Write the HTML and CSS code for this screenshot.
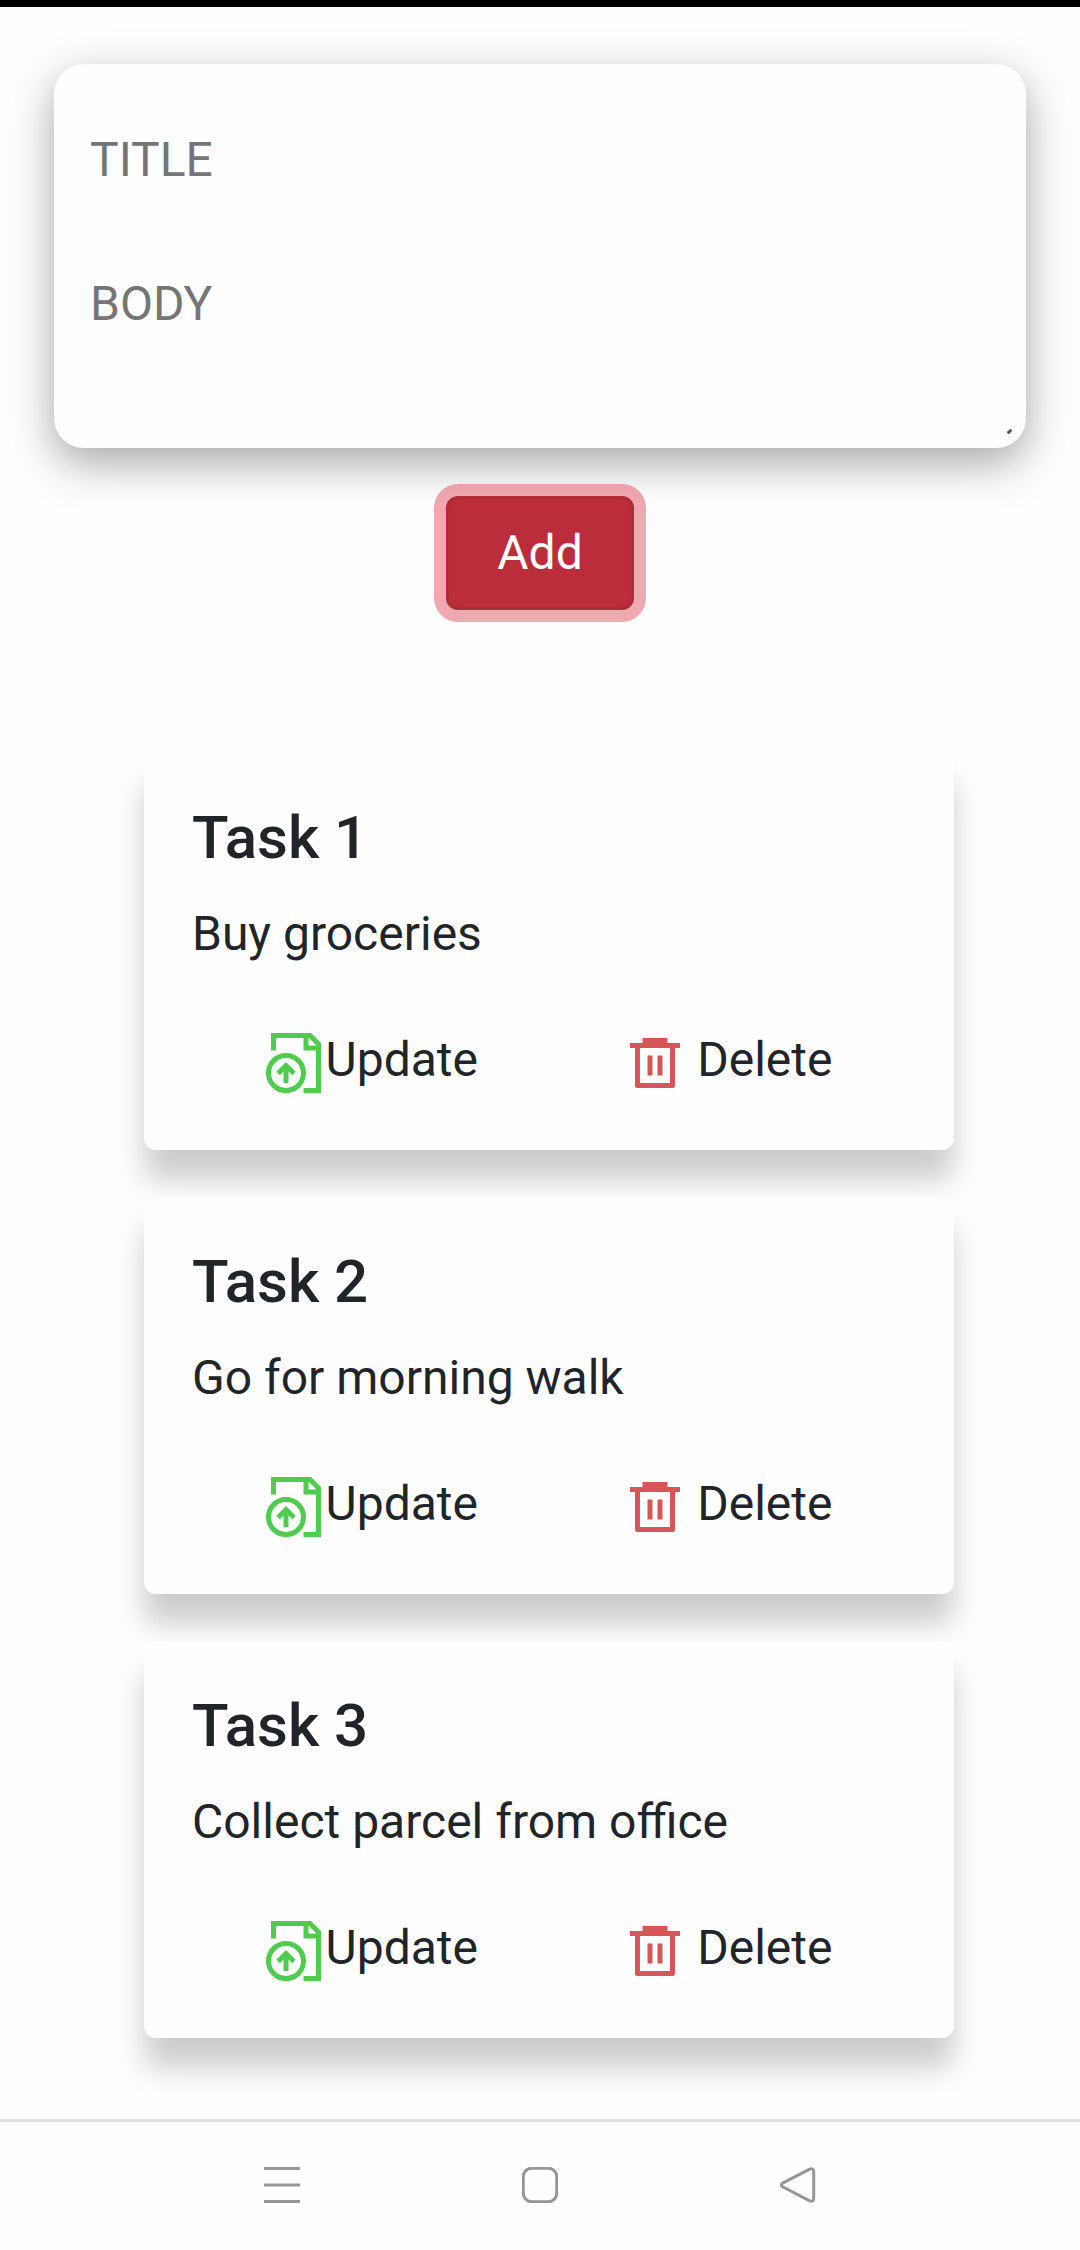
FILE: index.html
```html
<!DOCTYPE html>
<html lang="en">
<head>
<meta charset="utf-8">
<meta name="viewport" content="width=device-width, initial-scale=1">
<title>Tasks</title>
<link rel="stylesheet" href="styles.css">
</head>
<body>
<svg class="sprite" aria-hidden="true">
  <symbol id="icon-update" viewBox="1 0 24 24">
    <g fill="none" stroke="currentColor" stroke-width="2">
      <path d="M4 7V1H18.6L22 4.4V23H16"/>
      <path d="M17 1V6H22"/>
      <circle cx="9" cy="16" r="7"/>
      <path d="M9 20V13.5M5.8 16.2L9 13L12.2 16.2"/>
    </g>
  </symbol>
  <symbol id="icon-delete" viewBox="0 0 24 24">
    <path fill="currentColor" fill-rule="evenodd" d="M7 2H17V4H22V6H20V21Q20 22 19 22H5Q4 22 4 21V6H2V4H7ZM6 6V20H18V6ZM9 9H11V17H9ZM13 9H15V17H13Z"/>
  </symbol>
</svg>

<main class="app">
  <form class="note-form">
    <div class="note-fields">
      <input class="field" type="text" placeholder="TITLE" aria-label="Title">
      <textarea class="field" rows="2" placeholder="BODY" aria-label="Body"></textarea>
      <svg class="grip" viewBox="0 0 5 5" aria-hidden="true"><path d="M1.6 3.4L3.4 1.6" stroke="#555" stroke-width="3" stroke-linecap="round"/></svg>
    </div>
    <button class="add-button" type="button">Add</button>
  </form>

  <section class="task-list" aria-label="Tasks">
    <article class="task">
      <h2 class="task-title">Task 1</h2>
      <p class="task-body">Buy groceries</p>
      <div class="task-actions">
        <button class="action" type="button"><svg class="icon icon-update"><use href="#icon-update"/></svg>Update</button>
        <button class="action action-delete" type="button"><svg class="icon icon-delete"><use href="#icon-delete"/></svg>Delete</button>
      </div>
    </article>
    <article class="task">
      <h2 class="task-title">Task 2</h2>
      <p class="task-body">Go for morning walk</p>
      <div class="task-actions">
        <button class="action" type="button"><svg class="icon icon-update"><use href="#icon-update"/></svg>Update</button>
        <button class="action action-delete" type="button"><svg class="icon icon-delete"><use href="#icon-delete"/></svg>Delete</button>
      </div>
    </article>
    <article class="task">
      <h2 class="task-title">Task 3</h2>
      <p class="task-body">Collect parcel from office</p>
      <div class="task-actions">
        <button class="action" type="button"><svg class="icon icon-update"><use href="#icon-update"/></svg>Update</button>
        <button class="action action-delete" type="button"><svg class="icon icon-delete"><use href="#icon-delete"/></svg>Delete</button>
      </div>
    </article>
  </section>
</main>

<nav class="system-nav" aria-label="System">
  <button class="nav-button" type="button" aria-label="Recent apps">
    <svg class="nav-icon" viewBox="0 0 36 36"><path d="M0 1.5H36M0 18H36M0 34.5H36"/></svg>
  </button>
  <button class="nav-button" type="button" aria-label="Home">
    <svg class="nav-icon" viewBox="0 0 36 36"><rect x="1.25" y="1.25" width="33.5" height="33.5" rx="8.5"/></svg>
  </button>
  <button class="nav-button" type="button" aria-label="Back">
    <svg class="nav-icon" viewBox="0 0 36 36"><path d="M2.6 16.2L29.2 2.3Q33.7 .5 33.7 4.6V31.4Q33.7 35.5 29.2 33.7L2.6 19.8Q-.2 18 2.6 16.2Z"/></svg>
  </button>
</nav>
</body>
</html>
```
FILE: styles.css
```css
* {
  box-sizing: border-box;
}

body {
  display: flex;
  flex-direction: column;
  min-height: 100vh;
  margin: 0;
  border-top: 7px solid #000;
  background: #fefefe;
  color: #212529;
  font-family: Roboto, "Noto Sans", sans-serif;
  font-size: 48px;
  line-height: 72px;
}

button,
input,
textarea {
  margin: 0;
  border: 0;
  background: none;
  color: inherit;
  font: inherit;
}

.sprite {
  display: none;
}

.app {
  flex: 1;
  padding: 57px 0 81px;
}

/* New note form */
.note-form {
  display: flex;
  flex-direction: column;
  align-items: center;
  gap: 48px;
}

.note-fields {
  position: relative;
  width: 90%;
  padding-top: 24px;
  border-radius: 30px;
  background: #fefefe;
  box-shadow: 0 15px 45px rgba(0, 0, 0, 0.35);
}

.field {
  display: block;
  width: 100%;
  padding: 36px;
  outline: 0;
  resize: none;
}

.field::placeholder {
  color: #757575;
  opacity: 1;
}

.grip {
  position: absolute;
  right: 14px;
  bottom: 14px;
  width: 5px;
  height: 5px;
}

.add-button {
  position: relative;
  width: 188px;
  padding: 18px 0;
  border: 3px solid #b02a37;
  border-radius: 12px;
  background: #bb2d3b;
  box-shadow: 0 0 0 12px rgba(225, 83, 97, 0.5);
  color: #fff;
}

/* Task cards */
.task-list {
  display: flex;
  flex-direction: column;
  gap: 48px;
  margin-top: 144px;
  padding: 0 126px 0 144px;
}

.task {
  padding: 48px;
  border-radius: 12px;
  background: #fefefe;
  box-shadow: 0 30px 30px rgba(0, 0, 0, 0.2);
}

.task-title {
  margin: 0 0 24px;
  font-size: 60px;
  font-weight: 500;
  line-height: 72px;
}

.task-body {
  margin: 0 0 48px;
}

.task-actions {
  display: flex;
  justify-content: space-around;
  padding: 6px 0;
}

.action {
  display: flex;
  align-items: flex-end;
  padding: 0;
}

.action-delete {
  gap: 12px;
}

.icon {
  width: 60px;
  height: 60px;
  margin-bottom: 3px;
}

.icon-update {
  color: #4fcb50;
}

.icon-delete {
  color: #d75655;
}

/* System navigation bar */
.system-nav {
  display: grid;
  grid-template-columns: repeat(3, 1fr);
  padding: 0 153px;
  border-top: 3px solid #e2e2e2;
  background: #fefefe;
}

.nav-button {
  display: flex;
  justify-content: center;
  padding: 45px 0 47px;
}

.nav-icon {
  width: 36px;
  height: 36px;
  fill: none;
  stroke: #969696;
  stroke-width: 3px;
}
```
